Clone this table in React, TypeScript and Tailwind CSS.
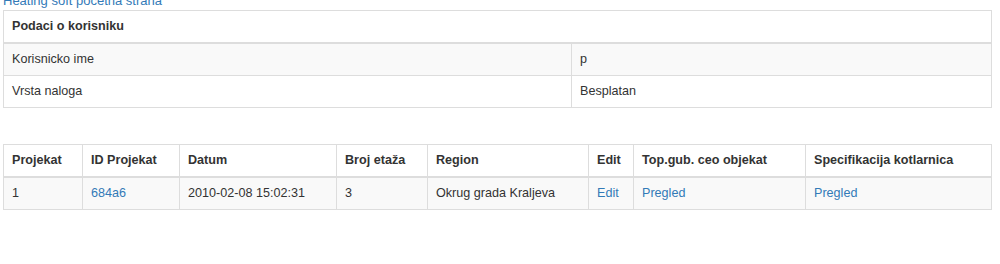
import React from "react";

const font = { fontFamily: '"Liberation Sans", Arial, Helvetica, sans-serif' };

export default function App() {
  const thB = "border border-[#ddd] border-b-2 px-[8px] py-[7px] text-left font-bold leading-[17px] align-bottom";
  const td = "border border-[#ddd] px-[8px] py-[7px] leading-[17px] align-top";
  return (
    <div className="w-[1000px] h-[264px] overflow-hidden bg-white text-[#333] text-[12.6px]" style={font}>
      <div className="h-[10px] pl-[3px] flow-root">
        <a href="#" className="block text-[#337ab7] leading-[18px] mt-[-8px] text-[13px]">Heating soft pocetna strana</a>
      </div>
      <div className="pl-[3px]">
        <table className="w-[989px] table-fixed border-collapse">
          <colgroup>
            <col className="w-[568px]" />
            <col />
          </colgroup>
          <thead>
            <tr>
              <th colSpan={2} className={thB}>Podaci o korisniku</th>
            </tr>
          </thead>
          <tbody>
            <tr className="bg-[#f9f9f9]">
              <td className={td}>Korisnicko ime</td>
              <td className={td}>p</td>
            </tr>
            <tr>
              <td className={td}>Vrsta naloga</td>
              <td className={td}>Besplatan</td>
            </tr>
          </tbody>
        </table>
      </div>
      <div className="pl-[3px] mt-[36px]">
        <table className="w-[989px] table-fixed border-collapse">
          <colgroup>
            <col className="w-[79px]" />
            <col className="w-[97px]" />
            <col className="w-[157px]" />
            <col className="w-[91px]" />
            <col className="w-[161px]" />
            <col className="w-[45px]" />
            <col className="w-[172px]" />
            <col />
          </colgroup>
          <thead>
            <tr>
              <th className={thB}>Projekat</th>
              <th className={thB}>ID Projekat</th>
              <th className={thB}>Datum</th>
              <th className={thB}>Broj etaža</th>
              <th className={thB}>Region</th>
              <th className={thB}>Edit</th>
              <th className={thB}>Top.gub. ceo objekat</th>
              <th className={thB}>Specifikacija kotlarnica</th>
            </tr>
          </thead>
          <tbody>
            <tr className="bg-[#f9f9f9]">
              <td className={td}>1</td>
              <td className={td}><a href="#" className="text-[#337ab7]">684a6</a></td>
              <td className={td}>2010-02-08 15:02:31</td>
              <td className={td}>3</td>
              <td className={td}>Okrug grada Kraljeva</td>
              <td className={td}><a href="#" className="text-[#337ab7]">Edit</a></td>
              <td className={td}><a href="#" className="text-[#337ab7]">Pregled</a></td>
              <td className={td}><a href="#" className="text-[#337ab7]">Pregled</a></td>
            </tr>
          </tbody>
        </table>
      </div>
    </div>
  );
}
